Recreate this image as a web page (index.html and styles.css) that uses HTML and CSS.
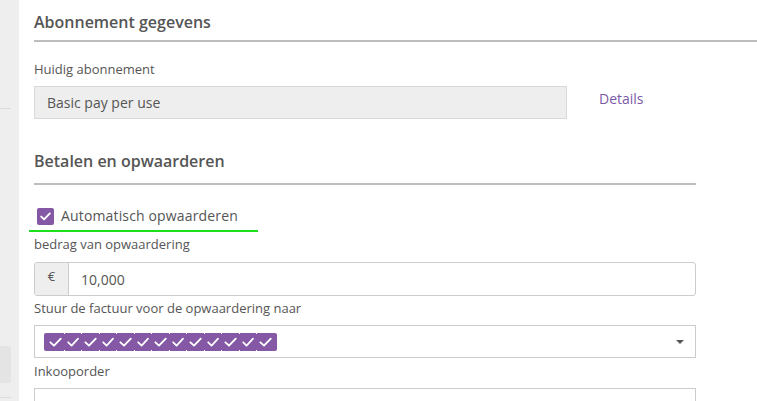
FILE: index.html
```html
<!DOCTYPE html>
<html lang="nl">
<head>
<meta charset="utf-8">
<title>Abonnement</title>
<link rel="stylesheet" href="styles.css">
</head>
<body>
<div class="page">
  <aside class="sidebar">
    <div class="side-top"></div>
    <div class="side-line"></div>
    <div class="side-gap"></div>
    <div class="side-item"></div>
    <div class="side-gap2"></div>
    <div class="side-line"></div>
  </aside>
  <main class="main">
    <section class="section section-wide">
      <h2 class="heading">Abonnement gegevens</h2>
      <div class="label label-first">Huidig abonnement</div>
      <div class="plan-row">
        <div class="readonly">Basic pay per use</div>
        <a class="details" href="#">Details</a>
      </div>
    </section>
    <section class="section section-form">
      <h2 class="heading heading-2">Betalen en opwaarderen</h2>
      <label class="check-row">
        <span class="checkbox"><svg width="11" height="9" viewBox="0 0 11 9"><path d="M1.2 4.6 L4.1 7.3 L9.8 1.4" fill="none" stroke="#fff" stroke-width="1.9" stroke-linecap="round" stroke-linejoin="round"/></svg></span>
        <span class="check-text">Automatisch opwaarderen</span>
      </label>
      <div class="green-mark"></div>
      <div class="label label-tight">bedrag van opwaardering</div>
      <div class="input-group">
        <span class="addon">€</span>
        <span class="input-value">10,000</span>
      </div>
      <div class="label label-tight">Stuur de factuur voor de opwaardering naar</div>
      <div class="select">
        <span class="tag">
          <i class="tick"></i><i class="tick"></i><i class="tick"></i><i class="tick"></i><i class="tick"></i><i class="tick"></i><i class="tick"></i><i class="tick"></i><i class="tick"></i><i class="tick"></i><i class="tick"></i><i class="tick"></i><i class="tick"></i>
        </span>
        <span class="caret"></span>
      </div>
      <div class="label label-tight2">Inkooporder</div>
      <div class="input-empty"></div>
    </section>
  </main>
</div>
</body>
</html>
```
FILE: styles.css
```css
html, body {
  margin: 0;
  padding: 0;
  background: #fff;
  overflow: hidden;
}
body {
  font-family: "Open Sans", "Noto Sans", sans-serif;
  color: #555;
}
.page {
  display: flex;
  width: 757px;
  height: 401px;
  overflow: hidden;
}
.sidebar {
  width: 19px;
  flex: none;
  background: #eeeeee;
  display: flex;
  flex-direction: column;
}
.side-top { height: 108px; }
.side-line { width: 11px; height: 1px; background: #dcdcdc; }
.side-gap { height: 237px; }
.side-item {
  width: 11px;
  height: 37px;
  background: #e4e4e4;
  border-radius: 0 3px 3px 0;
}
.side-gap2 { height: 14px; }
.main {
  flex: 1;
  padding-left: 15px;
  min-width: 0;
}
.section-wide { width: 760px; }
.section-form { width: 662px; }
.heading {
  margin: 0;
  padding: 10px 0 6px;
  font-size: 16px;
  line-height: 24px;
  font-weight: 600;
  color: #555;
  border-bottom: 2px solid #bdbdbd;
}
.heading-2 {
  margin-top: 30px;
  padding: 0 0 10px;
}
.label {
  font-size: 13px;
  line-height: 18px;
  color: #555;
}
.label-first { margin-top: 18px; }
.label-tight { margin-top: 3px; }
.label-tight2 { margin-top: 4px; }
.plan-row {
  margin-top: 8px;
  display: flex;
  align-items: center;
}
.readonly {
  width: 533px;
  height: 33px;
  box-sizing: border-box;
  background: #eeeeee;
  border: 1px solid #d9d9d9;
  font-size: 14px;
  line-height: 31px;
  padding-left: 12px;
  color: #555;
}
.details {
  margin-left: 32px;
  margin-top: -8px;
  font-size: 14px;
  color: #7a5aa6;
  text-decoration: none;
}
.check-row {
  margin-top: 19px;
  height: 24px;
  display: flex;
  align-items: center;
  padding-left: 3px;
}
.checkbox {
  width: 17px;
  height: 17px;
  border-radius: 2px;
  background: #8558a6;
  display: flex;
  align-items: center;
  justify-content: center;
}
.check-text {
  margin-left: 7px;
  font-size: 14px;
  letter-spacing: 0.15px;
  line-height: 24px;
  color: #555;
}
.green-mark {
  margin: 2px 0 0 -5px;
  width: 229px;
  height: 2px;
  background: #1de01d;
}
.input-group {
  margin-top: 9px;
  height: 34px;
  box-sizing: border-box;
  border: 1px solid #cccccc;
  border-radius: 3px;
  display: flex;
  align-items: center;
  overflow: hidden;
}
.addon {
  width: 33px;
  height: 100%;
  flex: none;
  background: #eeeeee;
  border-right: 1px solid #cccccc;
  text-align: center;
  font-size: 13px;
  line-height: 26px;
  color: #555;
}
.input-value {
  margin-left: 12px;
  font-size: 14px;
  color: #555;
}
.select {
  margin-top: 8px;
  height: 33px;
  box-sizing: border-box;
  border: 1px solid #cccccc;
  display: flex;
  align-items: center;
  padding-left: 9px;
  position: relative;
}
.tag {
  display: flex;
  height: 18px;
  padding: 0 2px 0 3px;
  background: #8558a6;
  border-radius: 2px;
  align-items: center;
}
.tick {
  width: 17.5px;
  height: 18px;
  display: block;
  background:
    url("data:image/svg+xml,%3Csvg xmlns='http://www.w3.org/2000/svg' width='18' height='18' viewBox='0 0 18 18'%3E%3Cpath d='M3.3 9.3 L6.8 12.6 L13.4 5.6' fill='none' stroke='white' stroke-width='1.8' stroke-linecap='round' stroke-linejoin='round'/%3E%3Crect x='16.5' y='0' width='1' height='1' fill='white'/%3E%3Crect x='16.5' y='17' width='1' height='1' fill='white'/%3E%3C/svg%3E") no-repeat;
}
.tick:last-child {
  background:
    url("data:image/svg+xml,%3Csvg xmlns='http://www.w3.org/2000/svg' width='18' height='18' viewBox='0 0 18 18'%3E%3Cpath d='M3.3 9.3 L6.8 12.6 L13.4 5.6' fill='none' stroke='white' stroke-width='1.8' stroke-linecap='round' stroke-linejoin='round'/%3E%3C/svg%3E") no-repeat;
}
.caret {
  position: absolute;
  right: 11px;
  top: 14px;
  width: 0;
  height: 0;
  border-left: 4px solid transparent;
  border-right: 4px solid transparent;
  border-top: 4px solid #555;
}
.input-empty {
  margin-top: 8px;
  height: 34px;
  box-sizing: border-box;
  border: 1px solid #cccccc;
}
```
